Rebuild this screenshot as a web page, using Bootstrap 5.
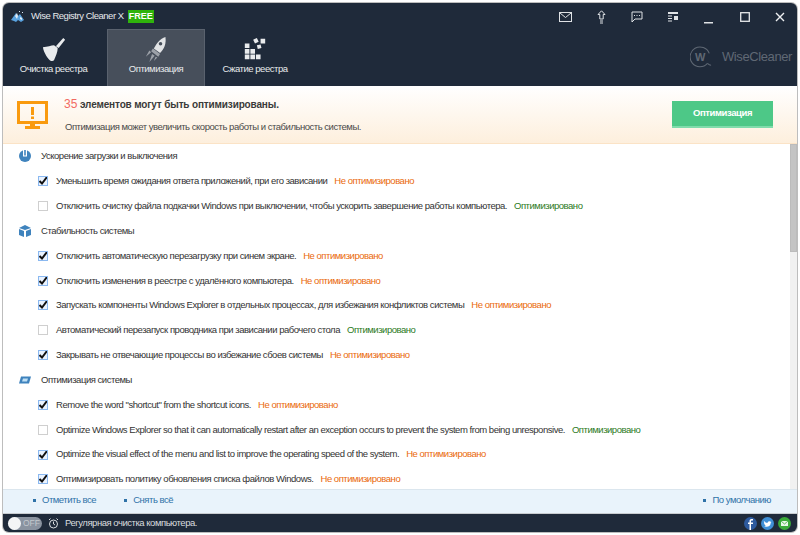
<!DOCTYPE html>
<html lang="ru">
<head>
<meta charset="UTF-8">
<title>Wise Registry Cleaner X</title>
<link href="https://cdn.jsdelivr.net/npm/bootstrap@5.3.3/dist/css/bootstrap.min.css" rel="stylesheet">
<style>
html, body { height: 100%; }
body { background: #fff; padding: 3px; font-family: "Liberation Sans", Arial, sans-serif; font-size: 9.5px; letter-spacing: -.47px; color: #333; overflow: hidden; }
.win { height: 529px; background: #1f2a3a; border-radius: 6px; box-shadow: 0 0 0 1px #bdbdbd; overflow: hidden; }
.titlebar { height: 26px; color: #e6e8ea; padding-left: 8px; padding-top: 1px; }
.title-name { margin-left: 6px; }
.free-tag { background: #2fb30c; color: #fff; font-weight: 700; font-size: 9px; padding: 0 1px; line-height: 13px; margin-left: 4px; letter-spacing: 0; }
.win-btns { width: 250px; }
.win-btns > span { width: 36px; height: 26px; }
.win-btns > span:last-child { width: 34px; }
.tabstrip { height: 57px; }
.tab-item { height: 57px; color: #e8eaec; padding-top: 8px; }
.tab-a { width: 104px; padding-right: 3px; }
.tab-b { width: 98px; background: #474f5b; border: 1px solid #5a626e; border-bottom: 0; padding-top: 7px; }
.tab-c { width: 100px; }
.tab-label { line-height: 13px; }
.brand-w { margin-left: auto; margin-right: 5px; color: #5f6874; font-size: 13px; letter-spacing: -.4px; gap: 10px; margin-top: -2px; }
.banner { height: 58px; background: linear-gradient(#fff, #fdefdd); border-bottom: 1px solid #fbe3c6; padding-left: 14px; padding-right: 24px; }
.banner-copy { margin-left: 16px; }
.banner-head { font-size: 10px; font-weight: 700; color: #3a3a3a; letter-spacing: -.15px; line-height: 14px; margin-bottom: 8px; }
.banner-head b { color: #f26a62; font-weight: 400; font-size: 12px; letter-spacing: 0; }
.banner-sub { color: #4a4a4a; line-height: 13px; margin-left: 1px; }
.go-btn { width: 101px; height: 27px; background: #4dc887; border: 0; border-bottom: 2px solid #7fdcab; border-radius: 0; color: #fff; font-size: 9.5px; font-weight: 700; padding: 0; letter-spacing: -.4px; }
.list-pane { height: 345px; background: #fff; overflow: hidden; }
.list-body { padding: 0 0 0 16px; }
.scroll-track { width: 7px; background: #f1f1f1; }
.scroll-thumb { height: 108px; background: #c4c4c4; border: 1px solid #bcbcbc; }
.sec-row { height: 24.85px; }
.sec-ico { width: 12px; height: 12px; margin-right: 10px; }
.opt-row { height: 24.85px; padding-left: 19px; }
.opt-row .form-check-input { width: 10px; height: 10px; margin: 0 8px 0 0; border: 1px solid #cfcfcf; border-radius: 0; flex: none; }
.opt-row .form-check-input:checked { background-color: #eaf3ff; border-color: #8ab8f0; background-image: url("data:image/svg+xml,%3csvg xmlns='http://www.w3.org/2000/svg' viewBox='0 0 10 10'%3e%3cpath fill='none' stroke='%23111' stroke-width='2' d='M1.5 5l2.5 2.5L9 1'/%3e%3c/svg%3e"); background-size: 10px 10px; }
.st-bad { color: #ea6a0c; margin-left: 7px; }
.st-ok { color: #2c7a1d; margin-left: 7px; }
.foot-links { height: 24px; background: #e9f3fb; border-top: 1px solid #dbe6ee; color: #2f72a8; padding-left: 30px; padding-right: 26px; padding-bottom: 2px; }
.foot-links span::before { content: ""; display: inline-block; width: 3px; height: 3px; background: #2f72a8; margin-right: 6px; vertical-align: middle; }
.foot-gap { margin-left: 28px; }
.statusbar { height: 19px; color: #d9dcdf; padding-left: 5px; padding-right: 6px; border-top: 1px solid #c8ccd0; }
.toggle-pill { width: 34px; height: 13px; border-radius: 7px; background: #8a93a0; color: #c2c8ce; font-size: 8.5px; letter-spacing: 0; line-height: 13px; padding-left: 15px; position: relative; }
.toggle-pill::before { content: ""; position: absolute; left: 0; top: 0; width: 13px; height: 13px; border-radius: 50%; background: #f4f5f6; }
.clock-ico { margin: 0 6px; }
.social-ico { gap: 4px; }
</style>
</head>
<body>
<div class="win d-flex flex-column">

  <div class="titlebar d-flex align-items-center">
    <svg width="14" height="13" viewBox="0 0 14 13"><path fill="#5aa3e0" d="M0 10L5 3l2 3 2-2 4 6-3 2-3-2-2 2-2-1z"/><path fill="#dfeaf4" d="M4 6l2-3 1 3-1 3zM8 1l1 0 0 1-1 0zM11 2l1 0 0 1-1 0zM9 7l2 1 0 2-2-1z"/></svg>
    <span class="title-name">Wise Registry Cleaner X</span>
    <span class="free-tag">FREE</span>
    <div class="win-btns ms-auto d-flex">
      <span class="d-flex align-items-center justify-content-center"><svg width="13" height="10" viewBox="0 0 13 10" fill="none" stroke="#dfe2e5"><rect x=".5" y=".5" width="12" height="9"/><path d="M1 1l5.500 4.500L12 1"/></svg></span>
      <span class="d-flex align-items-center justify-content-center"><svg width="9" height="14" viewBox="0 0 9 14" fill="none" stroke="#dfe2e5"><path d="M4.500 .8L8 4.500H6.200V9H2.800V4.500H1z"/><path d="M3 11h3M3 13h3"/></svg></span>
      <span class="d-flex align-items-center justify-content-center"><svg width="12" height="12" viewBox="0 0 12 12" fill="none" stroke="#dfe2e5"><path d="M1 1h10v7H4l-3 3z"/><path d="M3 4.500h1M5.500 4.500h1M8 4.500h1"/></svg></span>
      <span class="d-flex align-items-center justify-content-center"><svg width="10" height="10" viewBox="0 0 10 10" fill="#dfe2e5"><rect width="10" height="2"/><rect y="3.500" width="4" height="1"/><rect y="6" width="4" height="1"/><rect y="8.500" width="4" height="1"/><rect x="6" y="4" width="4" height="4"/></svg></span>
      <span class="d-flex align-items-center justify-content-center"><svg width="10" height="14" viewBox="0 0 10 14"><rect y="12" width="9" height="1.500" fill="#dfe2e5"/></svg></span>
      <span class="d-flex align-items-center justify-content-center"><svg width="10" height="10" viewBox="0 0 10 10" fill="none" stroke="#e6e8ea" stroke-width="1.300"><rect x=".7" y=".7" width="8.600" height="8.600"/></svg></span>
      <span class="d-flex align-items-center justify-content-center"><svg width="10" height="10" viewBox="0 0 10 10" fill="none" stroke="#eef0f2" stroke-width="1.400"><path d="M1 1l8 8M9 1l-8 8"/></svg></span>
    </div>
  </div>

  <div class="tabstrip d-flex">
    <div class="tab-item tab-a d-flex flex-column align-items-center">
      <svg width="26" height="25" viewBox="0 0 26 27" fill="#e9ebed"><path d="M23 1l2 2-7 9-3-2z"/><path d="M1 11c5 0 9-2 12-2l4 3c0 4-2 9-4 13-1 1-3 1-3 1-3-1-8-9-9-15z"/></svg>
      <span class="tab-label">Очистка реестра</span>
    </div>
    <div class="tab-item tab-b d-flex flex-column align-items-center">
      <svg width="23" height="25" viewBox="0 0 24 28"><path fill="#e2e4e6" d="M22 0c1 7-1 13-6 18l-7-5C12 7 16 2 22 0z"/><path fill="#9ca1a8" d="M8 13l8 6-2 3-8-6zM7 19l3 2-6 7zM4 15l2 2-6 5zM11 22l2 1-4 4z"/><circle cx="16.500" cy="7.500" r="2" fill="#474f5b"/></svg>
      <span class="tab-label">Оптимизация</span>
    </div>
    <div class="tab-item tab-c d-flex flex-column align-items-center">
      <svg width="24" height="25" viewBox="0 0 24 27" fill="#e9ebed"><path d="M2 5h5v5H2zM2 11h5v5H2zM8 11h5v5H8zM2 17h5v5H2zM8 17h5v5H8zM14 17h5v5h-5z" transform="translate(-1 2)"/><path d="M10 3l4-2 2 4-4 2zM18 2h5v5h-5zM14 9l4-1 1 4-4 1z"/></svg>
      <span class="tab-label">Сжатие реестра</span>
    </div>
    <div class="brand-w d-flex align-items-center">
      <svg width="22" height="22" viewBox="0 0 24 24" fill="none" stroke="#5f6874" stroke-width="1.100"><path d="M19 19A10.800 10.800 0 1 1 21 8"/><path d="M19 19c1 1 3 2 4 2"/><text x="11" y="16" text-anchor="middle" font-family="Liberation Sans" font-size="12" font-weight="700" fill="#5f6874" stroke="none">W</text></svg>
      <span>WiseCleaner</span>
    </div>
  </div>

  <div class="banner d-flex align-items-center">
    <svg width="31" height="28" viewBox="0 0 31 28"><path fill="none" stroke="#f99a0e" stroke-width="3" d="M1.500 1.500h28v20h-28z"/><path fill="#f99a0e" d="M14 6h3v8h-3zM14 15.500h3V18h-3zM13 23h5v2h-5zM8 25h15v3H8z"/></svg>
    <div class="banner-copy">
      <div class="banner-head"><b>35</b> элементов могут быть оптимизированы.</div>
      <div class="banner-sub">Оптимизация может увеличить скорость работы и стабильность системы.</div>
    </div>
    <button class="btn go-btn ms-auto" type="button">Оптимизация</button>
  </div>

  <div class="list-pane d-flex">
    <div class="list-body flex-grow-1">
      <div class="sec-row d-flex align-items-center">
        <svg class="sec-ico" viewBox="0 0 12 12"><circle cx="6" cy="6" r="6" fill="#3f83bd"/><path fill="#fff" d="M4 0h4v6.500H4z"/><path fill="#3f83bd" d="M5.200 0h1.600v5.500H5.200z"/></svg>
        <span>Ускорение загрузки и выключения</span>
      </div>
      <div class="opt-row d-flex align-items-center"><input class="form-check-input" type="checkbox" checked><span>Уменьшить время ожидания ответа приложений, при его зависании</span><span class="st-bad">Не оптимизировано</span></div>
      <div class="opt-row d-flex align-items-center"><input class="form-check-input" type="checkbox"><span>Отключить очистку файла подкачки Windows при выключении, чтобы ускорить завершение работы компьютера.</span><span class="st-ok">Оптимизировано</span></div>

      <div class="sec-row d-flex align-items-center">
        <svg class="sec-ico" viewBox="0 0 12 12" fill="#3f83bd"><path d="M0 3l6-3 6 3-6 2z"/><path d="M0 4l5 2v6l-5-2zM12 4L7 6v6l5-2z"/></svg>
        <span>Стабильность системы</span>
      </div>
      <div class="opt-row d-flex align-items-center"><input class="form-check-input" type="checkbox" checked><span>Отключить автоматическую перезагрузку при синем экране.</span><span class="st-bad">Не оптимизировано</span></div>
      <div class="opt-row d-flex align-items-center"><input class="form-check-input" type="checkbox" checked><span>Отключить изменения в реестре с удалённого компьютера.</span><span class="st-bad">Не оптимизировано</span></div>
      <div class="opt-row d-flex align-items-center"><input class="form-check-input" type="checkbox" checked><span>Запускать компоненты Windows Explorer в отдельных процессах, для избежания конфликтов системы</span><span class="st-bad">Не оптимизировано</span></div>
      <div class="opt-row d-flex align-items-center"><input class="form-check-input" type="checkbox"><span>Автоматический перезапуск проводника при зависании рабочего стола</span><span class="st-ok">Оптимизировано</span></div>
      <div class="opt-row d-flex align-items-center"><input class="form-check-input" type="checkbox" checked><span>Закрывать не отвечающие процессы во избежание сбоев системы</span><span class="st-bad">Не оптимизировано</span></div>

      <div class="sec-row d-flex align-items-center">
        <svg class="sec-ico" viewBox="0 0 12 12" fill="#3f83bd"><path d="M2 2.500h10l-2 7H0z"/><path fill="#bfe0f5" d="M4 4.500h5l-1 3H3z"/></svg>
        <span>Оптимизация системы</span>
      </div>
      <div class="opt-row d-flex align-items-center"><input class="form-check-input" type="checkbox" checked><span>Remove the word "shortcut" from the shortcut icons.</span><span class="st-bad">Не оптимизировано</span></div>
      <div class="opt-row d-flex align-items-center"><input class="form-check-input" type="checkbox"><span>Optimize Windows Explorer so that it can automatically restart after an exception occurs to prevent the system from being unresponsive.</span><span class="st-ok">Оптимизировано</span></div>
      <div class="opt-row d-flex align-items-center"><input class="form-check-input" type="checkbox" checked><span>Optimize the visual effect of the menu and list to improve the operating speed of the system.</span><span class="st-bad">Не оптимизировано</span></div>
      <div class="opt-row d-flex align-items-center"><input class="form-check-input" type="checkbox" checked><span>Оптимизировать политику обновления списка файлов Windows.</span><span class="st-bad">Не оптимизировано</span></div>
    </div>
    <div class="scroll-track"><div class="scroll-thumb"></div></div>
  </div>

  <div class="foot-links d-flex align-items-center">
    <span>Отметить все</span>
    <span class="foot-gap">Снять всё</span>
    <span class="ms-auto">По умолчанию</span>
  </div>

  <div class="statusbar d-flex align-items-center">
    <div class="toggle-pill">OFF</div>
    <svg class="clock-ico" width="11" height="11" viewBox="0 0 11 11" fill="none" stroke="#d9dcdf"><circle cx="5.500" cy="6" r="4"/><path d="M5.500 3.500V6l1.500 1M1 2l1.500-1.500M10 2L8.500 .5"/></svg>
    <span>Регулярная очистка компьютера.</span>
    <div class="social-ico ms-auto d-flex">
      <svg width="13" height="13" viewBox="0 0 13 13"><circle cx="6.500" cy="6.500" r="6.500" fill="#2d5a9e"/><path fill="#fff" d="M7 13V7h2V5.500H7V4.500c0-.6.300-1 1-1h1V2H7.500C6 2 5.500 3 5.500 4.200v1.300H4V7h1.500v6z"/></svg>
      <svg width="13" height="13" viewBox="0 0 13 13"><circle cx="6.500" cy="6.500" r="6.500" fill="#3f8fd6"/><path fill="#fff" d="M3 4c1 1.200 2.200 1.900 3.500 2 0-1.500 1.700-2.300 2.700-1.300l1-.4-.6 1 .8-.2-.7.8c0 2.500-2.500 5-6.700 3.500 1 0 1.700-.2 2.300-.7-1 0-1.500-.5-1.700-1h.8C3.400 7.400 3 6.800 3 6c.2.100.4.200.7.200C3 5.600 2.700 4.800 3 4z"/></svg>
      <svg width="13" height="13" viewBox="0 0 13 13"><circle cx="6.500" cy="6.500" r="6.500" fill="#3aab3a"/><rect x="3" y="4" width="7" height="5" fill="#e6f7e6"/><path d="M3 4l3.500 3L10 4" fill="none" stroke="#3aab3a" stroke-width=".8"/></svg>
    </div>
  </div>
</div>
<script src="https://cdn.jsdelivr.net/npm/bootstrap@5.3.3/dist/js/bootstrap.bundle.min.js"></script>
</body>
</html>
